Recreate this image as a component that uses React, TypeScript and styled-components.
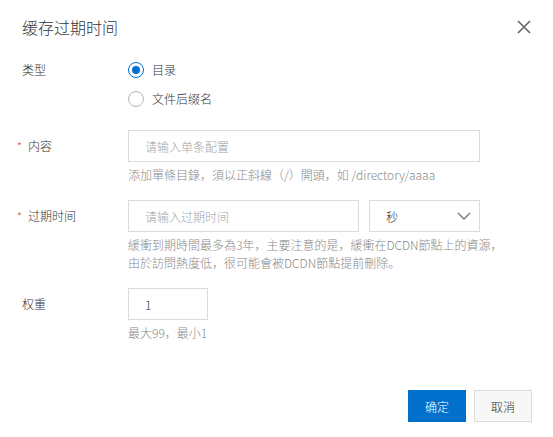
import React from "react";
import styled, { createGlobalStyle } from "styled-components";

const GlobalStyle = createGlobalStyle`
  html, body { margin: 0; padding: 0; background: #fff; }
  body {
    font-family: "Noto Sans CJK SC", "Liberation Sans", sans-serif;
    font-weight: 300;
    color: #333;
    font-size: 12px;
  }
  * { box-sizing: border-box; }
`;

const Dialog = styled.div`
  width: 553px;
  height: 437px;
  background: #fff;
  display: flex;
  flex-direction: column;
`;

const Header = styled.div`
  display: flex;
  align-items: center;
  justify-content: space-between;
  padding: 15px 22px 0 22px;
  height: 39px;
  > h2 {
    margin: 0;
    font-size: 16px;
    line-height: 24px;
    font-weight: 300;
    color: #333;
  }
  > button {
    border: none;
    background: none;
    padding: 0;
    width: 16px;
    height: 16px;
    display: flex;
    align-items: center;
    justify-content: center;
    margin-right: -1px;
  }
`;

const Form = styled.div`
  padding: 16px 0 0 16px;
  display: flex;
  flex-direction: column;
`;

const Row = styled.div<{ gap?: number }>`
  display: flex;
  align-items: flex-start;
  margin-bottom: ${(p) => p.gap ?? 16}px;
`;

const Label = styled.label<{ required?: boolean; tall?: number }>`
  width: 112px;
  flex-shrink: 0;
  line-height: ${(p) => p.tall ?? 32}px;
  padding-left: ${(p) => (p.required ? 0 : 6)}px;
  font-size: 12px;
  color: #333;
  > i {
    font-style: normal;
    color: #e0453b;
    display: inline-block;
    width: 12px;
    padding-left: 1px;
    font-size: 11px;
  }
`;

const Control = styled.div`
  display: flex;
  flex-direction: column;
`;

const RadioGroup = styled.div`
  display: flex;
  flex-direction: column;
`;

const RadioItem = styled.label`
  display: flex;
  align-items: center;
  height: 29px;
  gap: 8px;
  font-size: 12px;
  color: #333;
`;

const RadioDot = styled.span<{ checked?: boolean }>`
  width: 16px;
  height: 16px;
  border-radius: 50%;
  border: 1.5px solid ${(p) => (p.checked ? "#0070cc" : "#b5b5b5")};
  display: flex;
  align-items: center;
  justify-content: center;
  &::after {
    content: "";
    width: 8px;
    height: 8px;
    border-radius: 50%;
    background: ${(p) => (p.checked ? "#0070cc" : "transparent")};
  }
`;

const Fields = styled.div`
  display: flex;
  gap: 10px;
`;

const Input = styled.input<{ w: number }>`
  width: ${(p) => p.w}px;
  height: 32px;
  border: 1px solid #dcdcdc;
  padding: 0 16px;
  font-family: inherit;
  font-weight: 300;
  font-size: 12px;
  color: #333;
  outline: none;
  background: #fff;
  &::placeholder {
    color: #a3a3a3;
  }
`;

const Select = styled.div`
  width: 111px;
  height: 32px;
  border: 1px solid #dcdcdc;
  display: flex;
  align-items: center;
  justify-content: space-between;
  padding: 0 8px 0 16px;
  font-size: 12px;
  color: #333;
`;

const Help = styled.div`
  margin-top: 4px;
  font-size: 12px;
  line-height: 18px;
  color: #888;
`;

const Footer = styled.div`
  margin-top: auto;
  display: flex;
  justify-content: flex-end;
  gap: 8px;
  padding: 0 21px 15px 0;
`;

const Button = styled.button<{ primary?: boolean }>`
  width: 58px;
  height: 32px;
  font-family: inherit;
  font-weight: 300;
  font-size: 12px;
  border: 1px solid ${(p) => (p.primary ? "#0070cc" : "#dcdcdc")};
  background: ${(p) => (p.primary ? "#0070cc" : "#f7f7f7")};
  color: ${(p) => (p.primary ? "#fff" : "#333")};
  padding: 0;
`;

export default function App() {
  return (
    <Dialog>
      <GlobalStyle />
      <Header>
        <h2>缓存过期时间</h2>
        <button>
          <svg width="14" height="14" viewBox="0 0 14 14">
            <path d="M1 1L13 13M13 1L1 13" stroke="#666" strokeWidth="1.6" fill="none" />
          </svg>
        </button>
      </Header>
      <Form>
        <Row gap={17}>
          <Label tall={29}>类型</Label>
          <RadioGroup>
            <RadioItem>
              <RadioDot checked />
              目录
            </RadioItem>
            <RadioItem>
              <RadioDot />
              文件后缀名
            </RadioItem>
          </RadioGroup>
        </Row>
        <Row>
          <Label required>
            <i>*</i>内容
          </Label>
          <Control>
            <Input w={352} placeholder="请输入单条配置" />
            <Help>添加單條目錄，須以正斜線（/）開頭，如 /directory/aaaa</Help>
          </Control>
        </Row>
        <Row>
          <Label required>
            <i>*</i>过期时间
          </Label>
          <Control>
            <Fields>
              <Input w={231} placeholder="请输入过期时间" />
              <Select>
                秒
                <svg width="14" height="8" viewBox="0 0 14 8">
                  <path d="M1 1L7 7L13 1" stroke="#777" strokeWidth="1.3" fill="none" />
                </svg>
              </Select>
            </Fields>
            <Help>
              緩衝到期時間最多為3年，主要注意的是，緩衝在DCDN節點上的資源，
              <br />
              由於訪問熱度低，很可能會被DCDN節點提前刪除。
            </Help>
          </Control>
        </Row>
        <Row gap={0}>
          <Label>权重</Label>
          <Control>
            <Input w={80} defaultValue="1" />
            <Help>最大99，最小1</Help>
          </Control>
        </Row>
      </Form>
      <Footer>
        <Button primary>确定</Button>
        <Button>取消</Button>
      </Footer>
    </Dialog>
  );
}
